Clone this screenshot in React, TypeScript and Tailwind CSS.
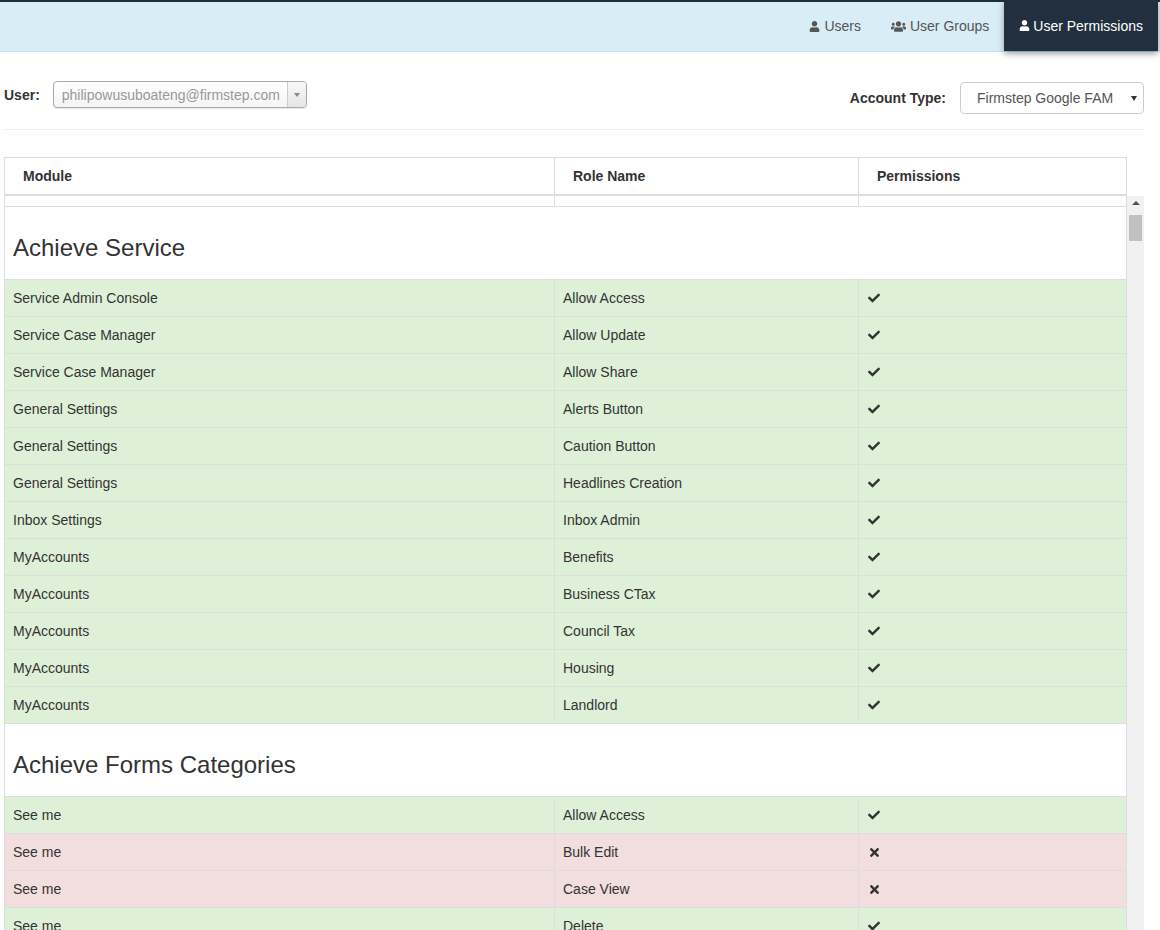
import React from "react";
import { FaUser, FaUsers, FaCheck, FaTimes } from "react-icons/fa";

type Row = { m: string; r: string; ok: boolean };

const sections: { title: string; rows: Row[] }[] = [
  {
    title: "Achieve Service",
    rows: [
      { m: "Service Admin Console", r: "Allow Access", ok: true },
      { m: "Service Case Manager", r: "Allow Update", ok: true },
      { m: "Service Case Manager", r: "Allow Share", ok: true },
      { m: "General Settings", r: "Alerts Button", ok: true },
      { m: "General Settings", r: "Caution Button", ok: true },
      { m: "General Settings", r: "Headlines Creation", ok: true },
      { m: "Inbox Settings", r: "Inbox Admin", ok: true },
      { m: "MyAccounts", r: "Benefits", ok: true },
      { m: "MyAccounts", r: "Business CTax", ok: true },
      { m: "MyAccounts", r: "Council Tax", ok: true },
      { m: "MyAccounts", r: "Housing", ok: true },
      { m: "MyAccounts", r: "Landlord", ok: true },
    ],
  },
  {
    title: "Achieve Forms Categories",
    rows: [
      { m: "See me", r: "Allow Access", ok: true },
      { m: "See me", r: "Bulk Edit", ok: false },
      { m: "See me", r: "Case View", ok: false },
      { m: "See me", r: "Delete", ok: true },
      { m: "See me", r: "Edit", ok: true },
      { m: "See me", r: "View", ok: true },
    ],
  },
];

export default function App() {
  return (
    <div className="h-[930px] w-[1160px] overflow-hidden bg-white font-['Liberation_Sans',Arial,sans-serif] text-[14px] leading-[20px] text-[#333]">
      {/* Navbar */}
      <div className="flex h-[52px] justify-end border-t-2 border-b border-t-[#1f2d3d] border-b-[#bce8f1] bg-[#d9edf7] pr-[2px]">
        <div className="-mt-[1px] flex items-center gap-[4px] px-[15px] text-[#555]">
          <FaUser size={11} />
          <span>Users</span>
        </div>
        <div className="-mt-[1px] flex items-center gap-[4px] px-[15px] text-[#555]">
          <FaUsers size={15} />
          <span>User Groups</span>
        </div>
        <div className="relative -mt-[2px] flex h-[51px] items-center gap-[3px] bg-[#222f3e] px-[15px] text-white shadow-[0_3px_6px_rgba(0,0,0,0.35)]">
          <FaUser size={11} />
          <span>User Permissions</span>
        </div>
      </div>

      <div className="ml-[4px] w-[1140px]">
        {/* Controls */}
        <div className="flex items-start justify-between">
          <div className="mt-[29px] flex items-center">
            <span className="font-bold">User:</span>
            <div className="ml-[13px] flex h-[27px] w-[254px] items-stretch overflow-hidden rounded-[4px] border border-[#aaa] bg-gradient-to-b from-white to-[#f4f4f4] shadow-[0_1px_1px_rgba(0,0,0,0.1)]">
              <div className="flex flex-1 items-center pl-[8px] text-[#999]">philipowusuboateng@firmstep.com</div>
              <div className="flex w-[19px] items-center justify-center border-l border-[#ccc] bg-gradient-to-b from-[#f8f8f8] to-[#e6e6e6]">
                <div className="h-0 w-0 border-x-[3px] border-t-[4px] border-x-transparent border-t-[#888]" />
              </div>
            </div>
          </div>
          <div className="mt-[30px] flex items-center">
            <span className="font-bold">Account Type:</span>
            <div className="ml-[14px] flex h-[32px] w-[184px] items-center justify-between rounded-[4px] border border-[#ccc] bg-white pl-[16px] pr-[6px] text-[#555]">
              <span>Firmstep Google FAM</span>
              <div className="h-0 w-0 border-x-[3.5px] border-t-[5px] border-x-transparent border-t-[#333]" />
            </div>
          </div>
        </div>

        <div className="mt-[15px] border-t border-[#eee]" />

        {/* Table header */}
        <div className="mt-[27px] flex h-[39px] w-[1123px] border-t border-b-2 border-[#ddd] font-bold">
          <div className="flex w-[550px] items-center border-l border-[#ddd] pl-[18px]">Module</div>
          <div className="flex w-[304px] items-center border-l border-[#ddd] pl-[18px]">Role Name</div>
          <div className="flex w-[269px] items-center border-x border-[#ddd] pl-[18px]">Permissions</div>
        </div>

        {/* Scroll body */}
        <div className="flex h-[734px] overflow-hidden">
          <div className="w-[1123px]">
            <div className="flex h-[10px]">
              <div className="w-[550px] border-l border-[#ddd]" />
              <div className="w-[304px] border-l border-[#ddd]" />
              <div className="w-[269px] border-x border-[#ddd]" />
            </div>
            {sections.map((s) => (
              <div key={s.title}>
                <div className="h-[73px] border-x border-t border-[#ddd] pl-[8px] pt-[28px] text-[24px] leading-[26px]">
                  {s.title}
                </div>
                {s.rows.map((row, i) => {
                  const bg = row.ok ? "bg-[#dff0d8]" : "bg-[#f2dede]";
                  return (
                    <div key={i} className={`flex h-[37px] border-t border-[#ddd] ${bg}`}>
                      <div className="flex w-[550px] items-center border-l border-[#ddd] pl-[8px]">{row.m}</div>
                      <div className="flex w-[304px] items-center border-l border-[#ddd] pl-[8px]">{row.r}</div>
                      <div className="flex w-[269px] items-center border-x border-[#ddd] pl-[9px]">
                        {row.ok ? <FaCheck size={12} /> : <FaTimes size={13} />}
                      </div>
                    </div>
                  );
                })}
              </div>
            ))}
          </div>
          {/* Scrollbar */}
          <div className="flex w-[17px] flex-col items-center bg-[#f1f1f1]">
            <div className="mt-[5px] h-0 w-0 border-x-[4px] border-b-[4px] border-x-transparent border-b-[#505050]" />
            <div className="mt-[10px] h-[26px] w-[13px] bg-[#c1c1c1]" />
          </div>
        </div>
      </div>
    </div>
  );
}
